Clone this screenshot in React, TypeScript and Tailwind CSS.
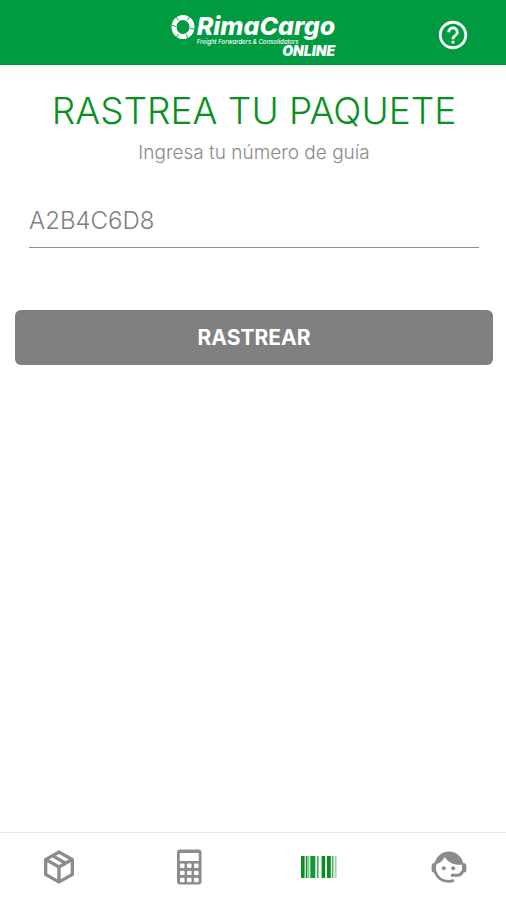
import * as React from "react";
import { MdHelpOutline } from "react-icons/md";

function WheelMark() {
  return (
    <svg viewBox="0 0 24 26" className="h-[26px] w-6" aria-hidden="true">
      <ellipse
        cx="12"
        cy="13"
        rx="9"
        ry="9.6"
        fill="none"
        stroke="#fff"
        strokeWidth="5"
      />
      <path
        d="M4.6 2.5 7.6 6.5M19 2.2l-2.6 4M24 15.4l-5-1.4M16.8 24.5l-1.6-4M5.4 23.2l2-3.4M.5 11l4.5 1.6"
        stroke="#009a40"
        strokeWidth="0.9"
      />
    </svg>
  );
}

function Logo() {
  return (
    <div className="flex items-start gap-0.5 text-white">
      <WheelMark />
      <div className="flex flex-col">
        <span className="text-[25px] leading-6 font-extrabold italic">
          RimaCargo
        </span>
        <span className="text-[6px] leading-[7px] font-medium italic">
          Freight Forwarders &amp; Consolidators
        </span>
        <span className="self-end text-[14px] leading-3 font-black italic">
          ONLINE
        </span>
      </div>
    </div>
  );
}

function PackageIcon() {
  return (
    <svg viewBox="1.2 1.2 21.6 21.6" className="size-9" fill="currentColor">
      <path d="M21,16.5C21,16.88 20.79,17.21 20.47,17.38L12.57,21.82C12.41,21.94 12.21,22 12,22C11.79,22 11.59,21.94 11.43,21.82L3.53,17.38C3.21,17.21 3,16.88 3,16.5V7.5C3,7.12 3.21,6.79 3.53,6.62L11.43,2.18C11.59,2.06 11.79,2 12,2C12.21,2 12.41,2.06 12.57,2.18L20.47,6.62C20.79,6.79 21,7.12 21,7.5V16.5M12,4.15L10.11,5.22L16,8.61L17.96,7.5L12,4.15M6.04,7.5L12,10.85L13.96,9.75L8.08,6.35L6.04,7.5M5,15.91L11,19.29V12.58L5,9.21V15.91M19,15.91V9.21L13,12.58V19.29L19,15.91Z" />
    </svg>
  );
}

function CalculatorIcon() {
  return (
    <svg viewBox="0 0 36 36" className="size-9">
      <rect x="6" y="0.5" width="24.5" height="35" rx="3" fill="currentColor" />
      <rect x="8.8" y="4" width="19" height="8" rx="0.5" fill="#fff" />
      {[14.5, 21.7, 28.8].map((y) =>
        [9, 16, 23].map((x) => (
          <rect
            key={`${x}-${y}`}
            x={x}
            y={y}
            width="4.6"
            height="4.4"
            rx="1.2"
            fill="#fff"
          />
        ))
      )}
    </svg>
  );
}

const bars = [
  { x: 0, w: 3.6, color: "#0a8f1f" },
  { x: 4.8, w: 1.6, color: "#0a8f1f" },
  { x: 7.3, w: 0.9, color: "#3fae5c" },
  { x: 9.3, w: 5, color: "#109a35" },
  { x: 16, w: 1.6, color: "#45ad58" },
  { x: 20.6, w: 3.6, color: "#0a8f1f" },
  { x: 26, w: 3.8, color: "#0a8f1f" },
  { x: 30.8, w: 1.6, color: "#58a862" },
  { x: 33.6, w: 2, color: "#a9cfae" },
];

function BarcodeIcon() {
  return (
    <svg viewBox="0 0 36 36" className="size-9">
      {bars.map((bar) => (
        <rect
          key={bar.x}
          x={bar.x}
          y="7"
          width={bar.w}
          height="22"
          fill={bar.color}
        />
      ))}
    </svg>
  );
}

function AgentIcon() {
  return (
    <svg viewBox="0 0 36 36" className="size-9" fill="none">
      <path
        d="M4.2 14a14.2 14.2 0 0 0 0 9c2 5.6 7.2 9.4 13.4 9.4 2 0 3.7-.4 5.4-1"
        stroke="currentColor"
        strokeWidth="2.8"
      />
      <path
        d="M3.4 15.6C4.6 8 10.6 2.6 18 2.6S31.4 8 32.6 15.6c-8.8 1.2-15-1.6-19-7.6-1.8 4.2-5 6.6-10.2 7.6Z"
        fill="currentColor"
      />
      <path
        d="M5 14.2v9.2H3a2.2 2.2 0 0 1-2.4-2.2v-4.8A2.2 2.2 0 0 1 3 14.2ZM31 14.2h2a2.2 2.2 0 0 1 2.4 2.2v4.8a2.2 2.2 0 0 1-2.4 2.2h-2Z"
        fill="currentColor"
      />
      <path
        d="M31.6 22c-1 3.2-2.4 4.2-5 4.2H20"
        stroke="currentColor"
        strokeWidth="3"
      />
      <circle cx="12.8" cy="19.2" r="2" fill="currentColor" />
      <circle cx="22.2" cy="19.2" r="2" fill="currentColor" />
    </svg>
  );
}

const tabs = [
  { label: "Paquetes", icon: <PackageIcon /> },
  { label: "Calculadora", icon: <CalculatorIcon /> },
  { label: "Rastreo", icon: <BarcodeIcon />, active: true },
  { label: "Soporte", icon: <AgentIcon /> },
];

export default function App() {
  const [guide, setGuide] = React.useState("");

  return (
    <div className="flex min-h-screen flex-col bg-white font-['Inter','Liberation_Sans',sans-serif]">
      <header className="grid grid-cols-[1fr_auto_1fr] items-start bg-[#009a40] px-9 pt-[14px] pb-2">
        <span />
        <Logo />
        <button
          type="button"
          aria-label="Ayuda"
          className="mt-1 justify-self-end text-white"
        >
          <MdHelpOutline className="size-[34px]" />
        </button>
      </header>

      <main className="flex grow flex-col pt-[26px] pr-[13px] pl-[15px]">
        <h1 className="text-center text-[37px] leading-10 font-light text-[#0a9022]">
          RASTREA TU PAQUETE
        </h1>
        <form
          className="flex flex-col"
          onSubmit={(event) => event.preventDefault()}
        >
          <label
            htmlFor="guide"
            className="mt-[10px] text-center text-[19px] leading-6 font-light text-[#8a8a8a]"
          >
            Ingresa tu número de guía
          </label>
          <input
            id="guide"
            type="text"
            value={guide}
            onChange={(event) => setGuide(event.target.value)}
            placeholder="A2B4C6D8"
            className="mx-[14px] mt-8 h-[51px] border-b border-[#8c8c8c] pb-1 text-[24px] font-light text-[#555] outline-none placeholder:text-[#808080]"
          />
          <button
            type="submit"
            className="mt-[62px] h-[55px] rounded-md bg-[#808080] text-[21px] font-bold text-white"
          >
            RASTREAR
          </button>
        </form>
      </main>

      <nav className="flex justify-between border-t border-[#e8e8e8] pt-4 pr-[39px] pb-[15px] pl-[41px]">
        {tabs.map((tab) => (
          <button
            key={tab.label}
            type="button"
            aria-label={tab.label}
            aria-current={tab.active ? "page" : undefined}
            className="text-[#8c8c8c]"
          >
            {tab.icon}
          </button>
        ))}
      </nav>
    </div>
  );
}
